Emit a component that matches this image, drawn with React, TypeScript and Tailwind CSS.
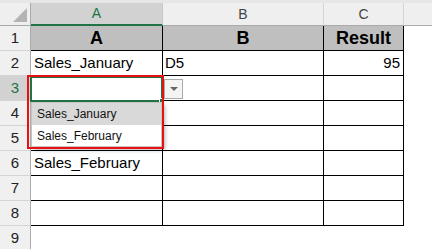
const rows = [
  { n: 1, a: 'A', b: 'B', c: 'Result', head: true },
  { n: 2, a: 'Sales_January', b: 'D5', c: '95' },
  { n: 3, a: '', b: '', c: '' },
  { n: 4, a: '', b: '', c: '' },
  { n: 5, a: '', b: '', c: '' },
  { n: 6, a: 'Sales_February', b: '', c: '' },
  { n: 7, a: '', b: '', c: '' },
  { n: 8, a: '', b: '', c: '' },
];

function RowHeader({ n, active }: { n: number; active?: boolean }) {
  return (
    <div
      className={`w-[31px] shrink-0 h-full flex items-center justify-center border-r border-b border-r-[#ababab] border-b-[#d4d4d4] text-[15px] ${
        active ? 'bg-[#d2d2d2] text-[#217346]' : 'bg-[#f0f0f0] text-[#222]'
      }`}
    >
      {n}
    </div>
  );
}

export default function App() {
  return (
    <div className="relative w-[432px] h-[249px] overflow-hidden bg-white font-['Liberation_Sans',Arial,sans-serif] text-black">
      {/* Column headers */}
      <div className="flex h-[26px] bg-[#efefef] border-t-[3px] border-[#e6e6e6]">
        <div className="w-[31px] shrink-0 relative border-r border-b border-[#ababab] bg-[#efefef]">
          <div className="absolute right-[3px] bottom-[3px] w-0 h-0 border-l-[14px] border-l-transparent border-b-[14px] border-b-[#b4b4b4]" />
        </div>
        <div className="w-[132px] shrink-0 flex items-center justify-center bg-[#d2d2d2] text-[#217346] text-[14px] border-r border-[#c6c6c6] border-b-2 border-b-[#217346]">
          A
        </div>
        <div className="w-[161px] shrink-0 flex items-center justify-center text-[14px] text-[#444] border-r border-[#d4d4d4] border-b border-b-[#ababab]">
          B
        </div>
        <div className="w-[80px] shrink-0 flex items-center justify-center text-[14px] text-[#444] border-r border-[#d4d4d4] border-b border-b-[#ababab]">
          C
        </div>
        <div className="flex-1 border-b border-[#ababab]" />
      </div>

      {/* Data rows */}
      {rows.map((r) => (
        <div key={r.n} className="flex h-[25px]">
          <RowHeader n={r.n} active={r.n === 3} />
          <div
            className={`w-[132px] shrink-0 flex items-center px-[3px] border-r border-b border-black text-[15px] ${
              r.head ? 'bg-[#bfbfbf] justify-center font-bold text-[18px]' : ''
            }`}
          >
            {r.a}
          </div>
          <div
            className={`w-[161px] shrink-0 flex items-center px-[2px] border-r border-b border-black text-[15px] ${
              r.head ? 'bg-[#bfbfbf] justify-center font-bold text-[18px]' : ''
            }`}
          >
            {r.b}
          </div>
          <div
            className={`w-[80px] shrink-0 flex items-center px-[3px] border-r border-b border-black text-[15px] ${
              r.head ? 'bg-[#bfbfbf] justify-center font-bold text-[18px]' : 'justify-end'
            }`}
          >
            {r.c}
          </div>
          <div className="flex-1" />
        </div>
      ))}
      <div className="flex h-[25px]">
        <RowHeader n={9} />
        <div className="flex-1" />
      </div>

      {/* Active cell A3 */}
      <div className="absolute left-[30px] top-[76px] w-[133px] h-[26px] border-2 border-[#217346] bg-white">
        <div className="absolute -right-[3px] -bottom-[3px] w-[5px] h-[5px] bg-[#217346] border border-white" />
      </div>

      {/* Dropdown arrow */}
      <div className="absolute left-[164px] top-[79px] w-[19px] h-[20px] border border-[#ababab] bg-[#f4f4f4] flex items-center justify-center">
        <div className="w-0 h-0 border-l-[4px] border-r-[4px] border-t-[4px] border-l-transparent border-r-transparent border-t-[#666]" />
      </div>

      {/* Dropdown list */}
      <div className="absolute left-[31px] top-[102px] w-[131px] h-[45px] bg-white border border-[#c6c6c6] shadow-[3px_3px_4px_rgba(0,0,0,0.3)] text-[12px] text-[#111]">
        <div className="h-[22px] flex items-center pl-[5px] bg-[#d9d9d9]">Sales_January</div>
        <div className="h-[21px] flex items-center pl-[5px]">Sales_February</div>
      </div>

      {/* Red highlight */}
      <div className="absolute left-[27px] top-[75px] w-[137px] h-[74px] border-2 border-[#e81010]" />
    </div>
  );
}
